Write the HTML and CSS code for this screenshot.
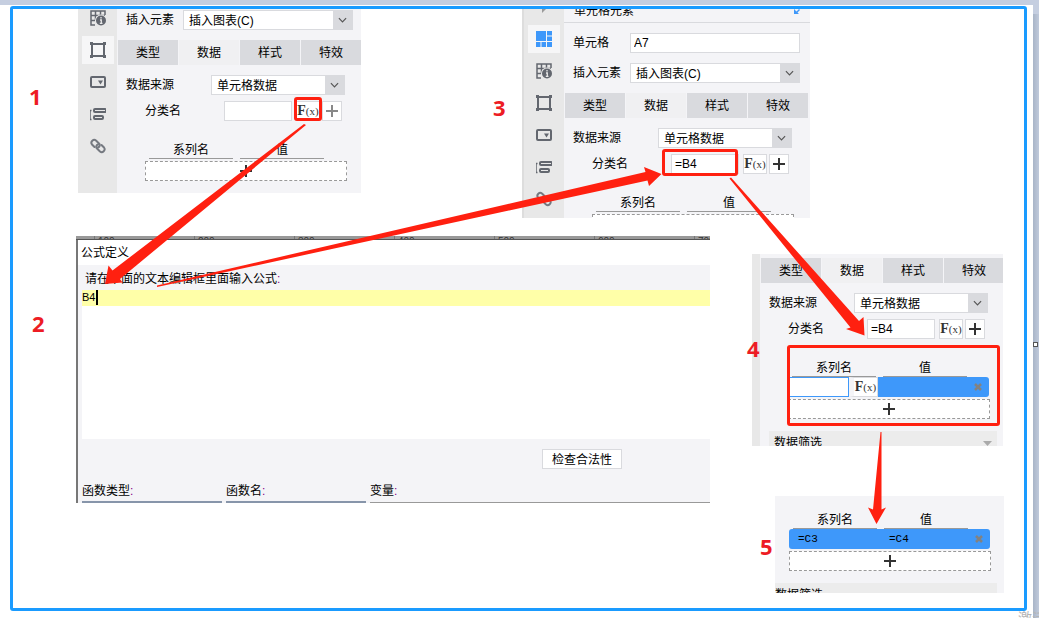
FILE: index.html
```html
<!DOCTYPE html>
<html lang="zh-CN">
<head>
<meta charset="utf-8">
<title>插入图表步骤</title>
<link rel="stylesheet" href="styles.css">
</head>
<body>
<svg class="symbols" aria-hidden="true">
  <symbol id="i-info" viewBox="0 0 16 16"><path d="M15 5V1H1v14h4M1 5.500h14M5.500 1v9M10.500 1v4M1 10.500h4" fill="none" stroke="#63676f" stroke-width="1.500"/><circle cx="11" cy="10.500" r="6" fill="#e8e8e8"/><circle cx="11" cy="10.500" r="5" fill="#63676f"/><path d="M11 7v1.500M10 10h1.300v3M9.800 13.300h2.700" fill="none" stroke="#e8e8e8" stroke-width="1.300"/></symbol>
  <symbol id="i-rect" viewBox="0 0 16 16"><path d="M2 2h12v12H2z" fill="none" stroke="#63676f" stroke-width="2"/><path d="M0 0h3v3H0zM13 0h3v3h-3zM0 13h3v3H0zM13 13h3v3h-3z" fill="#63676f"/></symbol>
  <symbol id="i-drop" viewBox="0 0 16 16"><rect x="1" y="3" width="14" height="10" rx="1" fill="none" stroke="#63676f" stroke-width="2"/><path d="M8 6.500h5l-2.500 4z" fill="#63676f"/></symbol>
  <symbol id="i-list" viewBox="0 0 16 16"><path d="M1.500 4.500H0v9h1.500" fill="none" stroke="#63676f" stroke-width="1.500"/><rect x="4" y="3" width="12" height="3" rx="1" fill="none" stroke="#63676f" stroke-width="2"/><rect x="4" y="10" width="9" height="3" rx="1" fill="none" stroke="#63676f" stroke-width="2"/></symbol>
  <symbol id="i-link" viewBox="0 0 16 16"><g fill="none" stroke="#757980" stroke-width="2" stroke-linecap="round"><path d="M4.500 9 2 6.500C0 4 3.500.500 6 2.500l3 3c1.500 1.500.500 3.500-1 4"/><path d="M11.500 7 14 9.500c2 2.500-1.500 6-4 4l-3-3C5.500 9 6.500 7 8 6.500"/></g></symbol>
  <symbol id="i-grid" viewBox="0 0 16 16"><path d="M0 0h10v10H0zM11 0h5v4.500h-5zM11 5.500h5V10h-5zM0 11h4.500v5H0zM5.500 11H10v5H5.500zM11 11h5v5h-5z" fill="#3e98fa"/></symbol>
  <symbol id="i-tri" viewBox="0 0 16 16"><path d="M6 4v10l5-5z" fill="#9a9a9a"/></symbol>
  <symbol id="i-chev" viewBox="0 0 20 20"><path d="m6 8 4 4 4-4" fill="none" stroke="#555" stroke-width="1.300"/></symbol>
  <symbol id="i-plus" viewBox="0 0 12 12"><path d="M6 0v12M0 6h12" fill="none" stroke="currentColor" stroke-width="2"/></symbol>
  <symbol id="i-close" viewBox="0 0 8 8"><path d="m1 1 6 6M7 1 1 7" fill="none" stroke="#828282" stroke-width="2.500"/></symbol>
</svg>

<div class="canvas">
  <div class="right-edge"></div>
  <div class="handle"></div>
  <div class="watermark">激活</div>

  <section class="panel panel-1">
    <nav class="side">
      <span class="tool"><svg><use href="#i-info"/></svg></span>
      <span class="tool active"><svg><use href="#i-rect"/></svg></span>
      <span class="tool"><svg><use href="#i-drop"/></svg></span>
      <span class="tool"><svg><use href="#i-list"/></svg></span>
      <span class="tool"><svg><use href="#i-link"/></svg></span>
    </nav>
    <div class="main">
      <div class="field"><label for="ins1">插入元素</label><div class="combo wide"><select id="ins1"><option>插入图表(C)</option></select><svg><use href="#i-chev"/></svg></div></div>
      <div class="tabs"><button>类型</button><button class="on">数据</button><button>样式</button><button>特效</button></div>
      <div class="field source"><label for="src1">数据来源</label><div class="combo"><select id="src1"><option>单元格数据</option></select><svg><use href="#i-chev"/></svg></div></div>
      <div class="field category"><label for="cat1">分类名</label><input id="cat1" type="text"><button class="fx">F<small>(x)</small></button><button class="add muted" aria-label="+"><svg><use href="#i-plus"/></svg></button></div>
      <div class="series">
        <div class="heads"><span>系列名</span><span>值</span></div>
        <button class="more" aria-label="+"><svg><use href="#i-plus"/></svg></button>
      </div>
    </div>
  </section>

  <section class="panel panel-3">
    <nav class="side">
      <span class="tool"><svg><use href="#i-tri"/></svg></span>
      <span class="tool active"><svg><use href="#i-grid"/></svg></span>
      <span class="tool"><svg><use href="#i-info"/></svg></span>
      <span class="tool"><svg><use href="#i-rect"/></svg></span>
      <span class="tool"><svg><use href="#i-drop"/></svg></span>
      <span class="tool"><svg><use href="#i-list"/></svg></span>
      <span class="tool"><svg><use href="#i-link"/></svg></span>
    </nav>
    <div class="main">
      <div class="title"><span>单元格元素</span><svg viewBox="0 0 6 6"><path d="M0 0v5h5L3.500 3.500 6 1 5 0 2.500 2.500z" fill="#3e98fa"/></svg></div>
      <div class="field cell"><label for="cell3">单元格</label><input id="cell3" class="wide" type="text" value="A7"></div>
      <div class="field"><label for="ins3">插入元素</label><div class="combo wide"><select id="ins3"><option>插入图表(C)</option></select><svg><use href="#i-chev"/></svg></div></div>
      <div class="tabs"><button>类型</button><button class="on">数据</button><button>样式</button><button>特效</button></div>
      <div class="field source"><label for="src3">数据来源</label><div class="combo"><select id="src3"><option>单元格数据</option></select><svg><use href="#i-chev"/></svg></div></div>
      <div class="field category"><label for="cat3">分类名</label><input id="cat3" type="text" value="=B4"><button class="fx">F<small>(x)</small></button><button class="add" aria-label="+"><svg><use href="#i-plus"/></svg></button></div>
      <div class="series">
        <div class="heads"><span>系列名</span><span>值</span></div>
        <div class="more"></div>
      </div>
    </div>
  </section>

  <section class="dialog">
    <div class="ruler"><span>100</span><span>200</span><span>300</span><span>400</span><span>500</span><span>600</span><span>700</span></div>
    <div class="dialog-title">公式定义</div>
    <label class="prompt" for="formula">请在下面的文本编辑框里面输入公式<i>:</i></label>
    <div class="editor"><input id="formula" type="text" value="B4" size="2"><span class="caret"></span></div>
    <div class="footer">
      <button class="check">检查合法性</button>
      <div class="lists">
        <div><span>函数类型<i>:</i></span></div>
        <div><span>函数名<i>:</i></span></div>
        <div class="vars"><span>变量<i>:</i></span></div>
      </div>
    </div>
  </section>

  <section class="panel panel-4">
    <nav class="side"></nav>
    <div class="main">
      <div class="tabs"><button>类型</button><button class="on">数据</button><button>样式</button><button>特效</button></div>
      <div class="field source"><label for="src4">数据来源</label><div class="combo"><select id="src4"><option>单元格数据</option></select><svg><use href="#i-chev"/></svg></div></div>
      <div class="field category"><label for="cat4">分类名</label><input id="cat4" type="text" value="=B4"><button class="fx">F<small>(x)</small></button><button class="add" aria-label="+"><svg><use href="#i-plus"/></svg></button></div>
      <div class="series">
        <div class="heads"><span>系列名</span><span>值</span></div>
        <div class="entry editing"><input type="text" aria-label="系列名"><button class="fx">F<small>(x)</small></button><svg class="close"><use href="#i-close"/></svg></div>
        <button class="more" aria-label="+"><svg><use href="#i-plus"/></svg></button>
      </div>
      <div class="filter"><span>数据筛选</span><svg viewBox="0 0 9 5"><path d="M0 0h9L4.500 5z" fill="#aaa"/></svg></div>
    </div>
  </section>

  <section class="panel panel-5">
    <div class="main">
      <div class="series">
        <div class="heads"><span>系列名</span><span>值</span></div>
        <div class="entry"><span>=C3</span><span>=C4</span><svg class="close"><use href="#i-close"/></svg></div>
        <button class="more" aria-label="+"><svg><use href="#i-plus"/></svg></button>
      </div>
      <div class="filter"><span>数据筛选</span></div>
    </div>
  </section>

  <div class="frame"></div>
  <div class="mark mark-fx"></div>
  <div class="mark mark-input"></div>
  <div class="mark mark-series"></div>
  <svg class="arrows" viewBox="0 0 1039 618" width="1039" height="618">
    <g fill="#ff2010">
      <path d="M304 124 306 125 120 279 122.500 282.500 105 284 108.500 265.500 112.500 270.500z"/>
      <path d="M157 285.500 645.500 172 644 167 661.500 174 649 186 647.500 180.500 157 287z"/>
      <path d="M729.500 178.500 731 177.500 859 321 863.500 317 864.500 335.500 846 329 850.500 327.500z"/>
      <path d="M880.500 432h1L881.500 509.500 886 507.500 876.500 524 868 507.500 873 509.500z"/>
    </g>
  </svg>
  <b class="step s1">1</b><b class="step s2">2</b><b class="step s3">3</b><b class="step s4">4</b><b class="step s5">5</b>
</div>
</body>
</html>
```

FILE: styles.css
```css
* { box-sizing: border-box; }
body { margin: 0; background: #fff; color: #000; overflow: hidden; font: 12px/20px "Liberation Sans", "Noto Sans CJK SC", sans-serif; }
button, input, select { font: inherit; color: inherit; margin: 0; padding: 0; border-radius: 0; outline: 0; }
i { font-style: normal; color: #808; }
svg { display: block; flex: none; }
.symbols { display: none; }

.canvas { position: relative; min-height: 100vh; border-top: 5px solid #c5cee0; overflow: hidden; margin: 0; }
.canvas > * { position: absolute; }
.right-edge { right: 0; top: 0; bottom: 0; width: 6px; background: linear-gradient(90deg, #a9b5c8, #c0cadb); border-top: 9px solid #c5cee0; }
.handle { left: 1033px; top: 337px; width: 5px; height: 5px; background: #fff; border: 1px solid #555; }
.watermark { left: 1018px; top: 603px; font-size: 14px; color: #b5b5b5; white-space: nowrap; }
.frame { left: 10px; top: 1px; width: 1017px; height: 605px; border: 3px solid #1a9bff; border-radius: 3px; }

.panel { display: flex; background: #f4f4f7; overflow: hidden; }
.panel-1 { left: 78px; top: 4px; width: 283px; height: 184px; }
.panel-3 { left: 522px; top: 4px; width: 288px; height: 209px; border-left: 2px solid #ddd; }
.panel-4 { left: 752px; top: 249px; width: 251px; height: 192px; }
.panel-5 { left: 775px; top: 491px; width: 229px; height: 97px; }

.side { flex: none; width: 39px; background: #e8e8e8; display: flex; flex-direction: column; align-items: center; gap: 4px; }
.panel-3 .side { width: 40px; }
.panel-4 .side { width: 8px; }
.tool { width: 32px; height: 28px; flex: none; display: grid; place-items: center; }
.tool svg { width: 16px; height: 16px; }
.tool.active { background: #f6f6f7; }
.panel-1 .tool:first-child { margin-top: -5px; }
.panel-3 .tool:first-child { margin-top: -16px; }

.main { flex: none; display: flex; flex-direction: column; width: 246px; }
.main > * { flex: none; }
.panel-1 .main { padding-top: 1px; }
.panel-4 .main { padding-top: 4px; }
.panel-5 .main { padding-top: 13px; }
.title { display: flex; justify-content: space-between; height: 14px; padding: 0 10px; border-bottom: 1px solid #d9dade; }
.title span { margin-top: -8px; }
.title svg { width: 6px; height: 6px; }
.field { display: flex; align-items: center; height: 20px; padding-left: 9px; }
.field label { width: 57px; line-height: 22px; white-space: nowrap; }
.cell { margin: 10px 0; }
.field input { width: 68px; height: 20px; padding-left: 3px; border: 1px solid #d9dade; background: #fff; }
.field input.wide { width: 170px; }
.combo { display: flex; width: 134px; height: 20px; border: 1px solid #d9dade; background: #fff; }
.combo.wide { width: 170px; }
.combo select { flex: 1; min-width: 0; border: 0; background: #fff; appearance: none; padding-left: 5px; }
.combo svg { width: 19px; height: 18px; background: #d9dade; }

.tabs { display: flex; gap: 1px; width: 243px; margin: 10px 0 10px 1px; }
.panel-4 .tabs { margin-top: 0; }
.tabs button { flex: 1; height: 25px; border: 0; background: #d9dade; }
.tabs .on { background: #f0f0f2; }
.source label { width: 85px; }
.category { margin-top: 6px; padding-left: 28px; }
.category label { width: 79px; }
.fx { width: 24px; height: 20px; border: 1px solid #d9dade; background: #fff; color: #333; font: bold 14px/18px "Liberation Serif", serif; white-space: nowrap; }
.fx small { font-size: 11px; font-weight: normal; }
.category .fx { margin: 0 2px 0 4px; }
.add { display: grid; place-items: center; width: 20px; height: 20px; border: 1px solid #d9dade; background: #fff; color: #333; }
.muted { color: #888; }
.add svg, .more svg { width: 12px; height: 12px; }

.series { width: 202px; margin: 18px 0 0 28px; }
.panel-5 .series { margin: 0 0 0 14px; }
.heads { display: flex; gap: 7px; padding-left: 4px; }
.heads span { width: 84px; height: 20px; line-height: 22px; text-align: center; border-bottom: 1px solid #999; }
.more { display: grid; place-items: center; width: 202px; height: 20px; margin-top: 2px; border: 1px dashed #999; background: #fff; color: #333; }
.entry { display: flex; align-items: center; width: 201px; height: 20px; background: #3e98fa; border-radius: 3px; font: 11px/18px "Liberation Mono", monospace; }
.entry span { width: 91px; padding-left: 9px; }
.entry .close { width: 8px; height: 8px; margin-left: auto; margin-right: 7px; }
.editing input { width: 61px; height: 20px; border: 1px solid #3e98fa; background: #fff; }
.editing .fx { width: 29px; border-left: 5px solid #f4f4f7; }
.filter { display: flex; justify-content: space-between; align-items: center; width: 228px; height: 24px; margin: 12px 0 0 9px; padding: 0 5px; background: #ececec; }
.filter svg { width: 9px; height: 5px; }
.panel-5 .filter { width: 222px; margin-left: 0; padding: 0; }

.dialog { left: 76px; top: 231px; width: 634px; border-left: 2px solid #777; background: #f4f4f7; }
.ruler { display: flex; height: 4px; margin-left: -2px; padding-left: 18px; background: #999; border-bottom: 1px solid #555; overflow: hidden; font-size: 10px; line-height: 12px; color: #333; }
.ruler span { flex: none; width: 100px; padding-left: 3px; border-left: 1px solid #777; }
.dialog-title { height: 25px; line-height: 26px; padding-left: 3px; background: #fff; }
.prompt { display: block; height: 25px; line-height: 28px; padding-left: 7px; }
.editor { display: flex; align-items: flex-start; height: 149px; margin-left: 4px; background: linear-gradient(#ffffa8 16px, #fff 16px); }
.editor input { width: 14px; height: 14px; border: 0; background: transparent; font-size: 11px; }
.caret { width: 2px; height: 15px; background: #000; }
.footer { padding-top: 10px; }
.check { display: block; width: 80px; height: 20px; margin-left: auto; margin-right: 88px; border: 1px solid #d9dade; background: #fff; }
.lists { display: flex; gap: 4px; margin: 11px 0 0 4px; line-height: 22px; }
.lists div { width: 140px; height: 23px; border-bottom: 2px solid #8795aa; }
.lists .vars { flex: 1; border-bottom: 1px solid #999; }

.mark { border: 3px solid #ff2010; border-radius: 3px; }
.mark-fx { left: 294px; top: 92px; width: 28px; height: 24px; }
.mark-input { left: 662px; top: 144px; width: 76px; height: 27px; }
.mark-series { left: 787px; top: 340px; width: 213px; height: 81px; }
.arrows { left: 0; top: -5px; pointer-events: none; }
.step { color: #ed1c24; font: bold 22px/24px "Open Sans", sans-serif; }
.s1 { left: 29px; top: 79px; }
.s2 { left: 32px; top: 306px; }
.s3 { left: 493px; top: 90px; }
.s4 { left: 747px; top: 331px; }
.s5 { left: 760px; top: 529px; }
```
